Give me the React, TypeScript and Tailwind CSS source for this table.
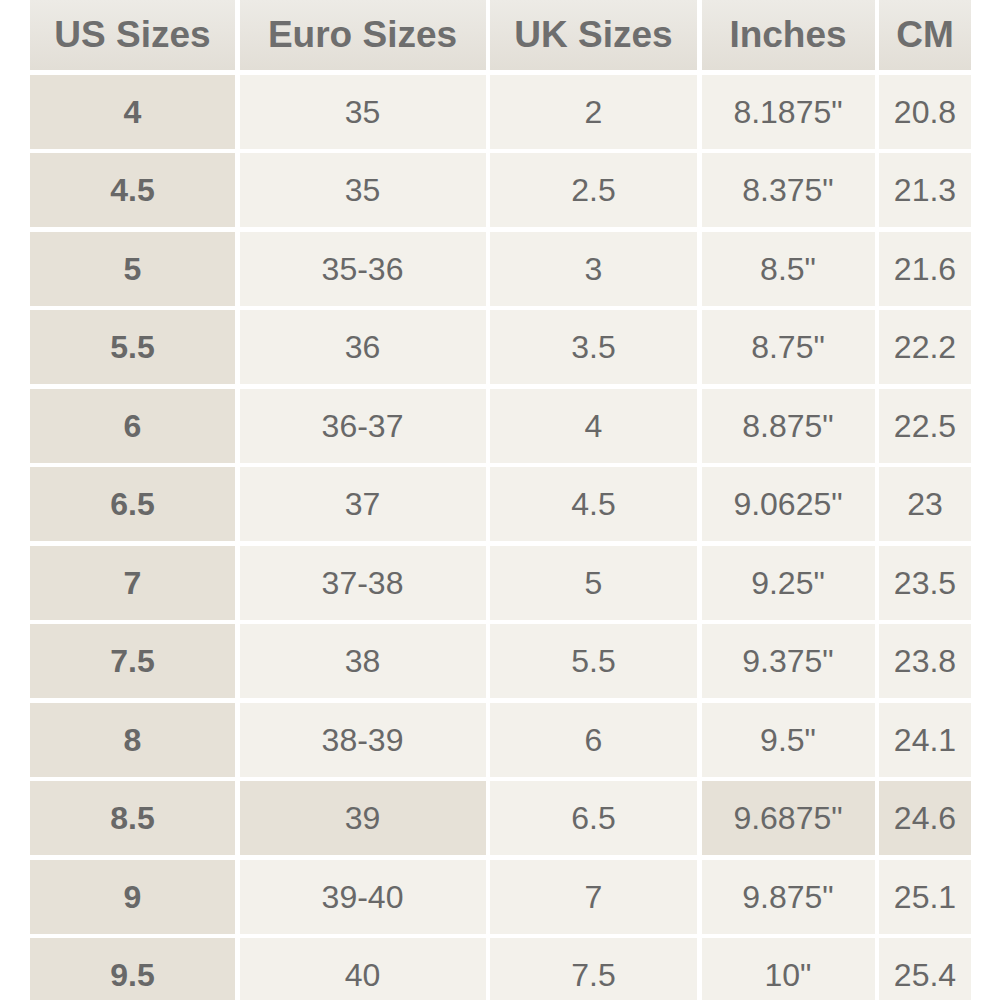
const headers = ["US Sizes", "Euro Sizes", "UK Sizes", "Inches", "CM"];

const rows: string[][] = [
  ["4", "35", "2", '8.1875"', "20.8"],
  ["4.5", "35", "2.5", '8.375"', "21.3"],
  ["5", "35-36", "3", '8.5"', "21.6"],
  ["5.5", "36", "3.5", '8.75"', "22.2"],
  ["6", "36-37", "4", '8.875"', "22.5"],
  ["6.5", "37", "4.5", '9.0625"', "23"],
  ["7", "37-38", "5", '9.25"', "23.5"],
  ["7.5", "38", "5.5", '9.375"', "23.8"],
  ["8", "38-39", "6", '9.5"', "24.1"],
  ["8.5", "39", "6.5", '9.6875"', "24.6"],
  ["9", "39-40", "7", '9.875"', "25.1"],
  ["9.5", "40", "7.5", '10"', "25.4"],
];

// row 8.5 has a few shaded cells (euro, inches, cm)
const shaded = (r: number, c: number) => c === 0 || (r === 9 && c !== 2);

export default function App() {
  return (
    <div className="h-[1000px] w-[1000px] overflow-hidden bg-white pl-[30px] font-['Liberation_Sans',Arial,sans-serif] text-[#686868]">
      <div className="grid grid-cols-[205px_246px_207px_173px_92px] auto-rows-[74px] grid-rows-[70px] gap-[4.5px]">
        {headers.map((h) => (
          <div
            key={h}
            className="flex items-center justify-center bg-linear-to-b from-[#edebe6] to-[#e2ded6] text-[37px] font-bold text-[#6e6e6e]"
          >
            {h}
          </div>
        ))}
        {rows.map((row, r) =>
          row.map((cell, c) => (
            <div
              key={`${r}-${c}`}
              className={`flex items-center justify-center text-[32px] ${
                shaded(r, c) ? "bg-[#e6e1d7]" : "bg-[#f3f1eb]"
              } ${c === 0 ? "font-bold" : ""}`}
            >
              {cell}
            </div>
          ))
        )}
      </div>
    </div>
  );
}
